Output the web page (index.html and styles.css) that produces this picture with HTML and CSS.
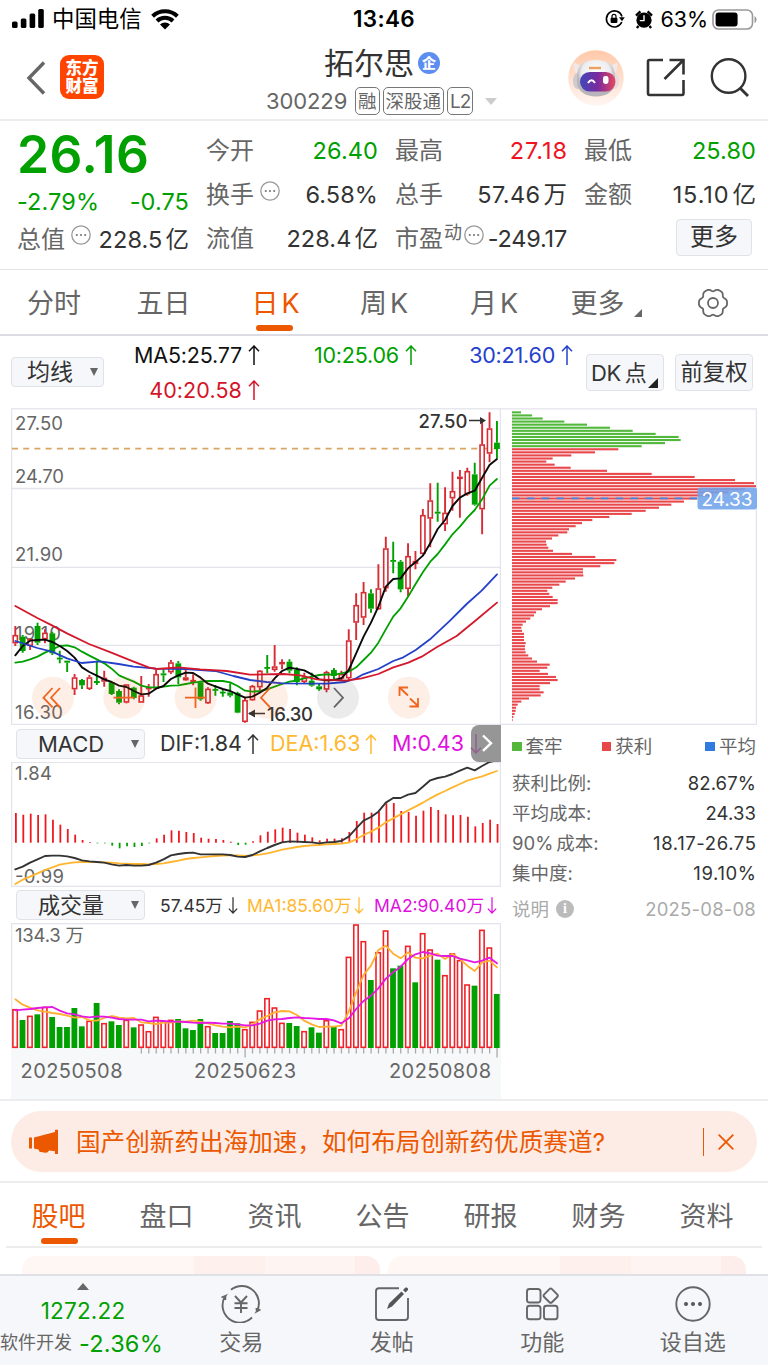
FILE: index.html
```html
<!DOCTYPE html>
<html lang="zh-CN">
<head>
<meta charset="utf-8">
<title>拓尔思 300229</title>
<link rel="stylesheet" href="styles.css">
</head>
<body>
<svg class="defs" width="0" height="0">
  <symbol id="up" viewBox="0 0 12 20"><path d="M6 20V1M1 6.2L6 1l5 5.2" fill="none" stroke="currentColor" stroke-width="1.5"/></symbol>
  <symbol id="down" viewBox="0 0 12 20"><path d="M6 0v19M1 13.8L6 19l5-5.2" fill="none" stroke="currentColor" stroke-width="1.5"/></symbol>
  <symbol id="dots" viewBox="0 0 20 20"><circle cx="10" cy="10" r="9.2" fill="none" stroke="#999" stroke-width="1.3"/><g fill="#777"><circle cx="5.8" cy="10" r="1.1"/><circle cx="10" cy="10" r="1.1"/><circle cx="14.2" cy="10" r="1.1"/></g></symbol>
</svg>

<div class="status">
  <div class="status-left">
    <svg width="32" height="20" viewBox="0 0 32 20"><rect x="0" y="12.5" width="5.6" height="6.5" rx="1.6"/><rect x="8.8" y="9.5" width="5.6" height="9.5" rx="1.6"/><rect x="17.6" y="4.5" width="5.6" height="14.5" rx="1.6"/><rect x="26.2" y="0" width="5.6" height="19" rx="1.6"/></svg>
    <span class="carrier">中国电信</span>
    <svg width="28" height="21" viewBox="0 0 28 21"><path d="M1.6 7.2a18 18 0 0 1 24.8 0M6 12a11.6 11.6 0 0 1 16 0" fill="none" stroke="#000" stroke-width="4"/><path d="M9 15.6a7 7 0 0 1 10 0L14 20.6z"/></svg>
  </div>
  <b class="clock">13:46</b>
  <div class="status-right">
    <svg width="20" height="20" viewBox="0 0 20 20"><path d="M16.8 13A8 8 0 1 1 17 7.4" fill="none" stroke="#000" stroke-width="1.6"/><path d="M14 8.2h5.8l-2.8 4z"/><rect x="5.6" y="8.8" width="6.8" height="5.2" rx="1"/><path d="M7 9V7.4a2 2 0 0 1 4 0V9" fill="none" stroke="#000" stroke-width="1.2"/></svg>
    <svg width="18" height="19" viewBox="0 0 18 19"><circle cx="9" cy="10.2" r="7.6"/><path d="M1 5.6L5.4 1.4M17 5.6L12.6 1.4M3.5 16l-1.6 2M14.5 16l1.6 2" stroke="#000" stroke-width="2.4"/><path d="M9 5.2v5.4H4.8" fill="none" stroke="#fff" stroke-width="1.4"/></svg>
    <span class="battery-text">63%</span>
    <svg width="46" height="21" viewBox="0 0 46 21"><rect x="1" y="1" width="39.5" height="19" rx="5.5" fill="none" stroke="#999" stroke-width="1.6"/><rect x="3.6" y="3.4" width="22" height="14" rx="3"/><path d="M42.5 7v7a4 4 0 0 0 0-7z" fill="#999"/></svg>
  </div>
</div>

<header class="header">
  <div class="head-left">
    <svg width="20" height="34" viewBox="0 0 20 34"><path d="M18 1.5L3 17l15 15.5" fill="none" stroke="#666" stroke-width="3.4"/></svg>
    <div class="logo"><span>东方</span><span>财富</span></div>
  </div>
  <div class="head-mid">
    <div class="title"><span>拓尔思</span><i class="badge">企</i></div>
    <div class="subtitle"><span class="code">300229</span><span class="tag">融</span><span class="tag">深股通</span><span class="tag tag-l2">L2</span><i class="caret"></i></div>
  </div>
  <div class="head-right">
    <svg width="56" height="56" viewBox="0 0 56 56">
      <defs>
        <linearGradient id="halo" x2="0" y2="1"><stop offset="0" stop-color="#ffc8a8"/><stop offset="1" stop-color="#fff6f2"/></linearGradient>
        <linearGradient id="visor"><stop offset="0" stop-color="#4048b8"/><stop offset=".5" stop-color="#7a2a9e"/><stop offset="1" stop-color="#e84860"/></linearGradient>
        <radialGradient id="head" cx=".5" cy=".35"><stop offset="0" stop-color="#fff"/><stop offset=".75" stop-color="#ededf0"/><stop offset="1" stop-color="#b8b4ba"/></radialGradient>
      </defs>
      <circle cx="28" cy="28" r="27.8" fill="url(#halo)"/>
      <path d="M6 12q-2 8 3 12l9-8q-8 0-12-4zM49 12q2 8-3 12l-9-8q8 0 12-4z" fill="#f2e8e6"/>
      <ellipse cx="9.5" cy="31" rx="4.5" ry="8" fill="#cfcad0"/><ellipse cx="46.5" cy="31" rx="4.500" ry="8" fill="#e6dcde"/>
      <path d="M9 27C9 15 16 10 28 10s19 5 19 17v5c0 9.500-9 14.500-19 14.500S9 41.500 9 32z" fill="url(#head)"/>
      <rect x="12" y="22" width="35.500" height="19.500" rx="9.700" fill="url(#visor)"/>
      <path d="M20 33q3.500-5.500 7 0" fill="none" stroke="#fff" stroke-width="2"/><rect x="35" y="26" width="5.500" height="8" rx="2.400" fill="#fff"/>
      <path d="M21 18h12" stroke="#eba05c" stroke-width="2.400"/>
    </svg>
    <svg width="40" height="40" viewBox="0 0 40 40"><path d="M17 2H3.500Q2 2 2 3.500V35Q2 37 3.500 37H36Q37.500 37 37.500 35V22M23.500 2H37.500V16.500M37 2.500L18.500 21" fill="none" stroke="#333" stroke-width="2.600"/></svg>
    <svg width="40" height="40" viewBox="0 0 40 40"><circle cx="18.600" cy="18" r="16.800" fill="none" stroke="#333" stroke-width="2.400"/><path d="M30 30l8 8" stroke="#333" stroke-width="2.800"/></svg>
  </div>
</header>

<section class="quote">
  <div class="col">
    <div class="price">26.16</div>
    <div class="cell change"><span class="v green">-2.79%</span><span class="v green">-0.75</span></div>
    <div class="cell"><span class="k">总值</span><svg class="info" width="20" height="20"><use href="#dots"/></svg><span class="v">228.5<em>亿</em></span></div>
  </div>
  <div class="col">
    <div class="cell"><span class="k">今开</span><span class="v green">26.40</span></div>
    <div class="cell"><span class="k">换手</span><svg class="info" width="20" height="20"><use href="#dots"/></svg><span class="v">6.58%</span></div>
    <div class="cell"><span class="k">流值</span><span class="v">228.4<em>亿</em></span></div>
  </div>
  <div class="col">
    <div class="cell"><span class="k">最高</span><span class="v red wide-num">27.18</span></div>
    <div class="cell"><span class="k">总手</span><span class="v mid-num">57.46<em>万</em></span></div>
    <div class="cell"><span class="k">市盈</span><span class="sup">动</span><svg class="info tight" width="20" height="20"><use href="#dots"/></svg><span class="v pe">-249.17</span></div>
  </div>
  <div class="col">
    <div class="cell"><span class="k">最低</span><span class="v green">25.80</span></div>
    <div class="cell"><span class="k">金额</span><span class="v wide-num">15.10<em>亿</em></span></div>
    <div class="cell more-cell"><button class="btn more">更多</button></div>
  </div>
</section>

<nav class="periods">
  <span>分时</span><span>五日</span><span class="on">日<em>K</em></span><span>周<em>K</em></span><span>月<em>K</em></span>
  <span class="more-tab">更多<i class="corner"></i></span>
  <span><svg width="32" height="30" viewBox="-16 -15 32 30"><path id="gear" fill="none" stroke="#666" stroke-width="1.800"/><circle r="5" fill="none" stroke="#666" stroke-width="1.800"/></svg></span>
</nav>

<section class="averages">
  <button class="btn select ma-select"><span>均线</span><i class="tri"></i></button>
  <div class="ma-grid">
    <span><b>MA5:25.77</b><svg width="12" height="20"><use href="#up"/></svg></span>
    <span class="ma-green"><b>10:25.06</b><svg width="12" height="20"><use href="#up"/></svg></span>
    <span class="ma-blue"><b>30:21.60</b><svg width="12" height="20"><use href="#up"/></svg></span>
    <span class="ma-red"><b>40:20.58</b><svg width="12" height="20"><use href="#up"/></svg></span>
  </div>
  <button class="btn square dk">DK<em>点</em><i class="corner dark"></i></button>
  <button class="btn square">前复权</button>
</section>

<main class="charts">
  <div class="left">
    <svg class="block" width="490" height="317" viewBox="11 408 490 317">
      <g stroke="#e3e4ec" stroke-width="1.300" fill="none"><rect x="11.600" y="408.800" width="488.800" height="315.700"/><path d="M12 488.500h488M12 567.300h488M12 645.300h488"/></g>
      <path d="M12 448.700H498" stroke="#d8a562" stroke-width="1.800" stroke-dasharray="6 5.200"/>
      <g class="axis"><text x="15" y="430" textLength="48">27.50</text><text x="15" y="483" textLength="49">24.70</text><text x="15" y="561" textLength="48">21.90</text><text x="15" y="640" textLength="46">19.10</text><text x="15" y="719" textLength="48">16.30</text></g>
      <g id="candles"></g>
      <g id="averages"></g>
      <g class="mark"><text x="418.500" y="428" textLength="49">27.50</text><text x="267" y="720.500" textLength="46">16.30</text></g>
      <path d="M469 420.600h13M249 713.500h16" stroke="#333" stroke-width="1.500"/><path d="M486 420.600l-6-3.600v7.200zM248 713.500l7-4v8z" fill="#333"/>
      <g fill="#ec5a0a" fill-opacity=".1"><circle cx="53" cy="697.700" r="21"/><circle cx="124.300" cy="697.700" r="21"/><circle cx="195.600" cy="697.700" r="21"/><circle cx="266.800" cy="697.700" r="21"/><circle cx="409" cy="697.700" r="21"/></g>
      <circle cx="338" cy="697.700" r="21" fill="#000" fill-opacity=".08"/>
      <g fill="none" stroke="#f0641e" stroke-width="1.800"><path d="M52.500 688l-9 9.700 9 9.700M60 688l-9 9.700 9 9.700M113.500 697.700h21M185 697.700h21M195.500 687.500v20.500M270 688l-9 9.700 9 9.700"/><path d="M399.500 696v-8.500h8.500M400 688l8 7.500M418 698v8.500h-8.500M418 706l-8-7.500"/></g>
      <path d="M334 688l9 9.700-9 9.700" fill="none" stroke="#666" stroke-width="1.800"/>
    </svg>
    <div class="bar macd-bar">
      <button class="btn select wide"><span>MACD</span><i class="tri"></i></button>
      <span class="ind i-dif"><b>DIF:1.84</b><svg width="12" height="20"><use href="#up"/></svg></span>
      <span class="ind i-dea"><b>DEA:1.63</b><svg width="12" height="20"><use href="#up"/></svg></span>
      <span class="ind i-m"><b>M:0.43</b><svg width="12" height="20"><use href="#down"/></svg></span>
      <i class="drawer"><svg width="30" height="37" viewBox="0 0 30 37"><path d="M12 10.500l8 7.700-8 7.700" fill="none" stroke="#fff" stroke-width="2.400"/></svg></i>
    </div>
    <svg class="block" width="490" height="125" viewBox="11 762 490 125">
      <path d="M11.600 762V886.400H500.400V762M11.600 762.400H500" fill="none" stroke="#e3e4ec" stroke-width="1.300"/>
      <g class="axis"><text x="15" y="780" textLength="37">1.84</text><text x="15" y="882.500" textLength="49">-0.99</text></g>
      <g id="macd"></g>
    </svg>
    <div class="bar vol-bar">
      <button class="btn select wide"><span>成交量</span><i class="tri"></i></button>
      <span class="ind i-vol"><b>57.45万</b><svg width="10" height="17"><use href="#down"/></svg></span>
      <span class="ind i-ma1"><b>MA1:85.60万</b><svg width="10" height="17"><use href="#down"/></svg></span>
      <span class="ind i-ma2"><b>MA2:90.40万</b><svg width="10" height="17"><use href="#down"/></svg></span>
    </div>
    <svg class="block" width="490" height="176" viewBox="11 923 490 176">
      <rect x="11" y="1048" width="490" height="51" fill="#f7f8fa"/>
      <path d="M11.600 1048V923.600H500.400V1048" fill="none" stroke="#e3e4ec" stroke-width="1.300"/>
      <g class="axis"><text x="15" y="941.500" textLength="69">134.3 万</text></g>
      <g id="volume"></g>
      <g class="dates"><text x="20.500" y="1077.500" textLength="102">20250508</text><text x="194" y="1077.500" textLength="102">20250623</text><text x="389" y="1077.500" textLength="102">20250808</text></g>
    </svg>
  </div>
  <aside class="chips">
    <svg class="block" width="257" height="317" viewBox="500 408 257 317">
      <path d="M501 408.800H756.400V724.500H501" fill="none" stroke="#e3e4ec" stroke-width="1.300"/>
      <g id="chips"></g>
      <path d="M512 498.400H698" stroke="#3d86e0" stroke-width="1.800" stroke-dasharray="7.500 7.300"/>
      <rect x="697.500" y="487.500" width="59.500" height="22" rx="3" fill="#6fa3ea" fill-opacity=".88"/>
      <text x="701.500" y="505.500" textLength="51" class="avg">24.33</text>
    </svg>
    <div class="legend"><span class="lg">套牢</span><span class="lr">获利</span><span class="lb">平均</span></div>
    <dl>
      <div><dt>获利比例:</dt><dd>82.67%</dd></div>
      <div><dt>平均成本:</dt><dd>24.33</dd></div>
      <div><dt>90%<em>成本:</em></dt><dd class="loose">18.17-26.75</dd></div>
      <div><dt>集中度:</dt><dd class="loose">19.10%</dd></div>
    </dl>
    <div class="note"><span>说明</span><i>i</i><time>2025-08-08</time></div>
  </aside>
</main>

<section class="promo">
  <div class="banner">
    <svg width="30" height="26" viewBox="0 0 30 26"><path d="M0 8.500h3v11H0zM5 8.500L26 3V.800h3V25h-3V22.300L20 21.500Q19 24.500 15 23.600L10.500 22.800 9.500 20.500 5 19.500z" fill="#ec5800"/></svg>
    <span class="headline">国产创新药出海加速，如何布局创新药优质赛道?</span>
    <i class="rule"></i>
    <svg width="16" height="16" viewBox="0 0 16 16"><path d="M.700.700l14.600 14.600M15.300.700L.700 15.300" stroke="#ec5800" stroke-width="1.800"/></svg>
  </div>
</section>

<nav class="tabs"><span class="on">股吧</span><span>盘口</span><span>资讯</span><span>公告</span><span>研报</span><span>财务</span><span>资料</span></nav>

<div class="cards"><div class="card"></div><div class="card"></div></div>

<footer class="dock">
  <div class="index"><i class="peak"></i><span class="index-value">1272.22</span><span class="index-row"><span>软件开发</span><b>-2.36%</b></span></div>
  <div class="item"><svg width="42" height="38" viewBox="-21 -19 42 38"><g fill="none" stroke="#666" stroke-width="1.900"><path d="M-10 -14.200A17.200 17.200 0 0 1 15.800 7.500L19.500 5.500M-19.500 -6.500L-15.500 -8.200A17.200 17.200 0 0 0 11 13.500M-15.500 -8.200L-15.800 -4M15.800 7.500L15.500 4"/><path d="M-6 -8L0 -1.500 6 -8M0 -1.500V9M-6.500 -.800H6.500M-6.500 4H6.500"/></g></svg><span>交易</span></div>
  <div class="item"><svg width="42" height="38" viewBox="-21 -19 42 38"><path d="M7 -15.700H-13Q-16 -15.700 -16 -12.700V13Q-16 16 -13 16H13Q16 16 16 13V-6" fill="none" stroke="#666" stroke-width="1.900"/><path d="M-5 5l2-5.500L9.500 -12.500 12 -10 0 2.500zM11 -14l2.500-2.500q3-.500 2.500 2.500L13.500 -11.500z" fill="#555"/></svg><span>发帖</span></div>
  <div class="item"><svg width="42" height="38" viewBox="-21 -19 42 38"><g fill="none" stroke="#666" stroke-width="1.900"><rect x="-15" y="-15" width="13.500" height="13.500" rx="2.500"/><rect x="-15" y="1.800" width="13.500" height="13.500" rx="2.500"/><rect x="2" y="1.800" width="13.500" height="13.500" rx="2.500"/><rect x="3.200" y="-13.800" width="11" height="11" rx="1.800" transform="rotate(45 8.700 -8.300)"/></g></svg><span>功能</span></div>
  <div class="item"><svg width="42" height="38" viewBox="-21 -19 42 38"><circle r="16.700" fill="none" stroke="#666" stroke-width="1.900"/><g fill="#555"><circle cx="-7" r="2"/><circle r="2"/><circle cx="7" r="2"/></g></svg><span>设自选</span></div>
</footer>
<script src="charts.js"></script>
</body>
</html>
```

FILE: styles.css
```css
* { box-sizing: border-box; }
body {
  margin: 0;
  width: 768px;
  height: 1366px;
  overflow: hidden;
  background: #fff;
  color: #333;
  font-family: Inter, "Noto Sans CJK SC", sans-serif;
  line-height: 1;
}
i, em { font-style: normal; }
svg { flex: none; }
.defs { display: none; }
.block { display: block; }
.green { color: #00a000 !important; }
.red { color: #f01420 !important; }

.btn {
  background: #f6f7fa;
  border: 1.5px solid #e0e2e8;
  border-radius: 4px;
  color: #333;
  font: inherit;
  padding: 0;
  white-space: nowrap;
}

.status {
  height: 40px;
  display: grid;
  grid-template-columns: 1fr auto 1fr;
  align-items: center;
  padding: 0 10px 2px 12px;
  color: #000;
}
.status-left, .status-right { display: flex; align-items: center; }
.status-right { justify-content: flex-end; gap: 10px; }
.carrier { font-size: 22.400px; margin: 1px 9px 0 8px; }
.clock { font-size: 22.500px; font-weight: 600; letter-spacing: .3px; margin: 1px 2px 0 0; }
.battery-text { font-size: 21.500px; letter-spacing: -.1px; margin: 1px -6px 0 -2px; }

.header {
  height: 81px;
  display: grid;
  grid-template-columns: 240px 1fr 201px;
  border-bottom: 2px solid #ededf0;
}
.head-left { display: flex; padding: 15px 0 0 26px; gap: 14px; }
.head-left > svg { margin-top: 6px; }
.logo {
  width: 44px; height: 44px;
  border-radius: 9px;
  background: #ff4400;
  color: #fff;
  font-weight: 900;
  font-size: 16.500px;
  display: flex;
  flex-direction: column;
  align-items: center;
  justify-content: center;
  line-height: 18px;
}
.head-mid { padding-top: 7px; }
.title { display: flex; align-items: center; padding-left: 84px; font-size: 30px; height: 32px; }
.badge {
  width: 22px; height: 22px; border-radius: 50%;
  background: #5c8df0; color: #fff;
  font-size: 14px; font-weight: 900;
  display: flex; align-items: center; justify-content: center;
  margin-left: 4px;
}
.subtitle { display: flex; align-items: center; padding-left: 26px; margin-top: 8px; height: 28px; color: #666; }
.code { font-size: 22px; width: 89px; letter-spacing: -.1px; }
.tag {
  height: 28px;
  border: 1.500px solid #777;
  border-radius: 5px;
  font-size: 18.500px;
  padding: 0 2px;
  margin-right: 3px;
  display: flex; align-items: center;
}
.tag-l2 { padding: 0 2px; font-size: 19px; letter-spacing: -1px; }
.caret { border: 6.500px solid transparent; border-top: 7px solid #ccc; border-bottom: 0; margin-left: 9px; }
.head-right { display: flex; padding: 10px 0 0 1px; }
.head-right svg:nth-child(2) { margin: 8px 0 0 22px; }
.head-right svg:nth-child(3) { margin: 8px 0 0 24px; }

.quote {
  height: 149px;
  display: grid;
  grid-template-columns: repeat(4, 172px);
  column-gap: 17px;
  padding: 8px 0 0 17px;
  border-bottom: 1px solid #e4e4e8;
}
.cell { height: 44px; display: flex; align-items: center; }
.k { font-size: 24px; color: #666; }
.v { font-size: 23.500px; margin-left: auto; letter-spacing: .1px; white-space: nowrap; }
.v em { margin-left: 3px; letter-spacing: 0; }
.v.mid-num { letter-spacing: .4px; }
.v.wide-num { letter-spacing: .9px; }
.v.wide-num:not(:has(em)) { margin-right: -.9px; }
.price { height: 56px; line-height: 51px; font-size: 51.500px; font-weight: 600; color: #00a000; letter-spacing: .5px; }
.change { height: 33px; padding-top: 1px; }
.change .v:first-child { margin-left: 0; }
.col:first-child .cell:last-child { height: 43px; }
.info { margin: -9px 0 0 6px; }
.info.tight { margin-left: 2px; }
.sup { font-size: 18px; color: #666; margin: -12px 0 0 1px; }
.v.pe { letter-spacing: -.2px; }
.more-cell { justify-content: flex-end; }
.more { width: 76px; height: 37px; font-size: 24px; margin: -4px 4px 0 0; }

.periods {
  height: 66px;
  display: grid;
  grid-template-columns: 108px 111px 110px 110px 110px 118px 92px;
  border-bottom: 2px solid #dcdde4;
  font-size: 27px;
  color: #666;
}
.periods > span { display: flex; align-items: center; justify-content: center; padding-top: 2px; position: relative; }
.periods > .on { padding-left: 3px; }
.periods em { margin-left: 3px; }
.periods > .more-tab { padding-right: 4px; }
.on { color: #ec5800; }
.on::after {
  content: ""; position: absolute; left: 50%; bottom: 3.500px;
  width: 37px; height: 6px; margin-left: -18.500px;
  border-radius: 3px; background: #ec5800;
}
.corner { width: 0; height: 0; border-left: 8px solid transparent; border-bottom: 8px solid #666; margin: 19px 0 0 9px; }

.averages { height: 72px; display: flex; padding: 0 15px 0 11px; }
.select { display: flex; align-items: center; justify-content: space-between; }
.tri { border: 4.500px solid transparent; border-top: 8px solid #666; border-bottom: 0; }
.ma-select { width: 93px; height: 30px; margin-top: 21px; font-size: 23px; padding: 0 5px 0 15px; }
.ma-grid {
  width: 469px;
  display: grid;
  grid-template-columns: 156px 157px 156px;
  grid-template-rows: 35px 35px;
  padding-top: 2px;
  font-size: 21.500px;
  color: #111;
}
.ma-grid span { display: flex; align-items: center; justify-content: flex-end; gap: 6px; }
.ma-grid svg { margin-top: -2px; }
.ma-grid b, .ind b { font-weight: 400; white-space: nowrap; }
.ma-grid span b { letter-spacing: -.2px; }
.ma-green { color: #00a000; }
.ma-blue { color: #2440cc; }
.ma-grid .ma-red { color: #d41428; }
.ma-grid .ma-red b { letter-spacing: .1px; }
.square { width: 78px; height: 37px; margin-top: 18px; font-size: 22.400px; flex: none; }
.dk { margin: 18px 11px 0 13px; position: relative; text-align: left; padding-left: 4px; font-size: 22px; letter-spacing: -.4px; }
.dk em { margin-left: 4px; }
.corner.dark { position: absolute; right: 5px; bottom: 2px; border-left: 10px solid transparent; border-bottom: 10px solid #222; margin: 0; }

.charts { display: flex; height: 691px; padding-left: 11px; }
.left { width: 489px; flex: none; }
.chips { width: 257px; }
.axis text, .dates text { fill: #666; font-size: 18.500px; }
.dates text { font-size: 20px; }
.mark text { fill: #333; font-size: 18.500px; font-weight: 500; }
.avg { fill: #fff; font-size: 19px; }

.bar { height: 37px; display: flex; align-items: center; padding-left: 5px; position: relative; font-size: 21.500px; }
.vol-bar { height: 36px; font-size: 17.500px; }
.bar b { padding-top: 1px; }
.wide { width: 129px; height: 30px; font-size: 22px; padding: 0 5px 0 21px; flex: none; }
.ind { display: flex; align-items: center; gap: 5px; flex: none; }
.i-dif { width: 110px; margin-left: 15px; }
.i-dea { width: 122px; color: #ffb830; }
.i-m { color: #e010e0; gap: 6px; }
.i-vol { width: 87px; margin-left: 15px; }
.i-ma1 { width: 127px; color: #ffb830; }
.i-ma2 { color: #e010e0; }
.i-ma1, .i-ma2 { gap: 3px; }
.drawer { position: absolute; left: 460px; top: 0; width: 30px; height: 37px; background: rgba(120,120,120,.78); border-radius: 8px 0 0 8px; }

.legend { display: flex; justify-content: space-between; padding: 12px 1px 0 12px; font-size: 18.500px; color: #666; }
.legend span { display: flex; align-items: center; gap: 4px; }
.legend span::before { content: ""; width: 9.500px; height: 9.500px; background: #55b83c; }
.legend .lr { margin-right: 14px; }
.legend .lr::before { background: #e84848; }
.legend .lb::before { background: #2f7be0; }
dl { margin: 13px 1px 0 12px; }
dl div { height: 29.800px; display: flex; justify-content: space-between; align-items: center; font-size: 18.500px; }
dt { color: #666; }
dt em { margin-left: 3px; }
dd { margin: 0; letter-spacing: .1px; }
dd.loose { letter-spacing: .6px; margin-right: -.6px; }
.note { display: flex; align-items: center; padding: 0 1px 0 12px; margin-top: 12px; font-size: 18.500px; color: #aaa; }
.note i { width: 18px; height: 18px; margin-left: 7px; border-radius: 50%; background: #bbb; color: #fff; font: bold 14px/18px "Liberation Serif", serif; text-align: center; }
.note time { margin-left: auto; letter-spacing: .2px; }

.promo { height: 84px; border-top: 2px solid #ededf0; border-bottom: 2px solid #ededf0; padding: 10px 11px 0; }
.banner { height: 61px; border-radius: 31px; background: #fdece5; color: #ec5800; display: flex; align-items: center; padding: 0 23px 0 18px; }
.headline { font-size: 24.600px; margin: 2px 0 0 17px; white-space: nowrap; }
.rule { width: 1.500px; height: 28px; background: #ec5800; margin: 0 14px 0 auto; }

.tabs { height: 65px; margin: 0 6px; border-bottom: 2px solid #ededf0; display: grid; grid-template-columns: repeat(7, 108px); font-size: 27px; color: #666; }
.tabs span { display: flex; justify-content: center; align-items: center; padding: 4px 3px 0 0; position: relative; }
.tabs .on::after { bottom: 2px; margin-left: -19px; }

.cards { height: 26px; padding: 8px 22px 0; display: flex; gap: 8px; overflow: hidden; }
.card { width: 358px; height: 40px; border-radius: 14px; background: linear-gradient(90deg, #fef7f3 0 48%, #fdf0ed 48% 68%, #fef4f1 68% 93%, #fdeeec 93%); }

.dock { height: 91px; background: #f6f7fa; border-top: 2px solid #dfe1e7; display: grid; grid-template-columns: 166px repeat(4, 150.500px); color: #666; }
.item { display: flex; flex-direction: column; align-items: center; padding-top: 9px; font-size: 22px; }
.item span { margin-top: 8px; }
.index { display: flex; flex-direction: column; align-items: center; padding-top: 7px; }
.peak { border: 6.500px solid transparent; border-bottom: 7px solid #666; border-top: 0; }
.index-value { color: #00a000; font-size: 22.500px; margin-top: 10px; letter-spacing: .2px; }
.index-row { display: flex; align-items: center; gap: 7px; margin-top: 9px; font-size: 18px; margin-left: -3px; white-space: nowrap; }
.index-row b { font-weight: 400; font-size: 23.500px; color: #00a000; letter-spacing: .2px; }
```

FILE: charts.js
```js
const NS = 'http://www.w3.org/2000/svg';
const el = (parent, name, attrs) => {
  const node = document.createElementNS(NS, name);
  for (const key in attrs) node.setAttribute(key, attrs[key]);
  document.getElementById(parent).appendChild(node);
};
const RED = '#d62c34', GREEN = '#00a000';
const x = i => 15.3 + 7.41 * i;

// Settings gear: a circle with six soft lobes.
let gear = '';
for (let a = 0; a <= 360; a += 3) {
  const r = 13.2 + 1.2 * Math.cos(6 * a * Math.PI / 180) - .35 * Math.cos(12 * a * Math.PI / 180);
  gear += (a ? 'L' : 'M') + (r * Math.cos(a * Math.PI / 180)).toFixed(2) + ' ' + (r * Math.sin(a * Math.PI / 180)).toFixed(2);
}
document.getElementById('gear').setAttribute('d', gear + 'Z');

// Candles: [up/down, high, low, body top, body bottom], thirds of a pixel from the panel base.
const early = `r108,168,135,160 g135,188,140,183 r145,180,147,168 g98,165,108,158 r118,160,128,148 g125,195,130,190 g182,220,203,208 g212,246,212,218
r252,315,262,298 g267,297,270,286 r255,300,262,297 g212,285,273,279 r242,290,263,275 g275,315,277,312 g298,343,303,338 r283,340,283,338
g290,328,293,324 r258,338,316,338 r282,320,292,298 r240,298,252,296 g238,276,250,256 r210,252,217,247 g213,283,220,262 r240,272,262,271
r253,286,270,277 g272,332,277,328 r292,342,296,340 g285,317,297,301 g298,320,305,309 g280,322,307,317 g305,370,309,368 r320,398,330,396
r285,332,288,331 r240,300,242,292 g195,250,231,235 r165,245,229,240 r208,238,216,223 g208,250,215,242 g232,286,240,276 r248,280,262,276
g248,290,272,287 g280,302,289,298 r242,307,246,299 g234,268,240,258 r242,272,252,266 r118,272,151,265 r10,150,45,98 r-24,105,6,83
g-2,68,10,56 r-77,60,-5,58`;
const late = `r395,560,430,550 g410,505,465,470 g465,562,470,553 r415,575,453,552 r438,493,468,477 r312,448,330,447 r235,427,286,341 g233,350,320,326
r247,378,323,358 r200,317,258,280 r195,338,215,222 r188,272,198,268 g173,302,208,299 r48,388,118,313 r22,172,70,146 g48,160,113,132`;
const parse = (text, base) => text.split(/\s+/).map(s => [s[0], ...s.slice(1).split(',').map(v => base + v / 3)]);
[...parse(early, 590), ...parse(late, 405)].forEach(([c, hi, lo, top, bottom], i) => {
  const stroke = c === 'r' ? RED : GREEN, cx = x(i);
  el('candles', 'path', { d: `M${cx} ${hi}V${top}M${cx} ${bottom}V${lo}`, stroke, 'stroke-width': 1.9 });
  const h = Math.max(bottom - top, 1.8);
  el('candles', 'rect', c === 'r'
    ? { x: cx - 2.1, y: top + .7, width: 4.2, height: Math.max(h - 1.4, .6), fill: '#fff', stroke, 'stroke-width': 1.6 }
    : { x: cx - 2.9, y: top, width: 5.8, height: h, fill: stroke });
});

const line = (parent, pts, stroke, width = 1.8) => el(parent, 'polyline', {
  points: pts.map(p => p.join()).join(' '), fill: 'none', stroke, 'stroke-width': width, 'stroke-linejoin': 'round', 'stroke-linecap': 'round' });
const series = (values, base, start = 0) => values.map((v, i) => [x(i + start), base + v / 3]);

line('averages', [
  ...series([218,215,208,200,188,178,168,166,172,185,197,208,220,236,256,266,275,287,292,292,290,287,286,282,278,275,273,273,273,277,288,302,305,303,298,290,282,275,271,265,260,255,253,254,250,245,232,210,188,158,118,80,55], 590),
  ...series([575,538,502,470,447,418,388,365,338,315,283,242,222], 405, 53)], GREEN);
line('averages', [
  ...series([196,168,152,150,149,156,168,183,203,232,246,257,268,276,287,291,303,313,311,296,288,267,256,248,249,263,281,289,297,303,313,323,320,308,293,265,243,233,237,241,253,268,271,270,265,240,190,140,98,50], 590),
  ...series([545,522,520,490,472,452,415,372,345,303,278,265,257,218,180,162], 405, 50)], '#0a0a0a', 1.9);
const thirds = (pts, x0, y0) => pts.map(([a, b]) => [x0 + a / 3, y0 + b / 3]);
line('averages', [
  ...thirds([[46,153],[112,174],[156,185],[201,205],[245,219],[300,214],[356,222],[401,230],[468,236],[557,237],[646,243],[700,258]], 0, 590),
  ...thirds([[0,270],[50,276],[100,280],[230,281],[285,276],[318,265],[340,253],[385,237],[430,213],[460,202],[497,180],[540,148],[600,92],[650,42],[695,2],[741,-47]], 250, 590)], '#2440c8');
line('averages', [
  ...thirds([[46,48],[112,84],[156,106],[201,130],[267,162],[334,188],[401,215],[446,232],[470,237],[535,232],[600,238],[680,243]], 0, 590),
  ...thirds([[0,254],[100,252],[150,256],[200,268],[290,272],[335,265],[385,252],[430,232],[475,218],[515,200],[560,172],[620,138],[675,93],[741,38]], 250, 590)], '#d4182c');

// MACD bars around the zero line, then DIF and DEA.
[174,179,176,180,178,194,209,222,239,255,261,265,265,272,280,274,276,273,265,250,239,226,227,231,234,248,251,252,255,260,270,269,259,241,230,223,218,222,233,239,247,256,251,251,250,231,198,173,173,170,145,144,168,171,182,167,156,165,178,181,180,185,214,204,194,207]
  .forEach((v, i) => el('macd', 'path', { d: `M${x(i) + .6} 842.7V${755 + v / 3}`, stroke: v > 263 ? GREEN : '#f01820', 'stroke-width': 1.8 }));
line('macd', series([387,374,365,355,345,337,329,325,322,321,321,321,322,323,325,326,327,327,328,327,325,321,317,312,309,307,305,303,302,301,301,303,301,299,295,290,284,280,276,273,271,270,268,267,266,263,253,240,230,218,202,190,178,166,155,143,130,118,108,97,87,77,70,64,56,48], 755), '#ffb52e');
line('macd', series([343,335,323,313,303,302,302,304,309,316,319,321,323,328,332,330,332,332,330,323,313,301,297,294,293,298,298,298,298,300,305,306,300,289,279,270,262,259,260,261,262,265,262,261,258,245,220,197,186,170,143,129,129,119,114,95,76,69,65,57,47,38,46,33,21,16], 755), '#333', 1.9);

// Volume.
`r762 g795 r782 g778 r755 g786 g816 g816 g759 g814 r797 g744 r804 g799 g810 r794 g817 r808 r828 r785 r798 r794 g792 g820 g825 g792 r813 g834 g834 g798 g805 r822 r800 r766 r729 r757 r803 g804 g813 r828 g817 g833 r795 g815 r822 r605 r508 r558 g675 r591 r526 g640 g632 r572 g682 r534 r583 g614 r660 r595 r615 r688 g692 r524 r577 g717`
  .split(' ').forEach((s, i) => {
    const y = 755 + s.slice(1) / 3, h = 1048 - y, cx = x(i) - .2;
    el('volume', 'rect', s[0] === 'r'
      ? { x: cx - 2.2, y: y + .7, width: 4.4, height: h - 1.4, fill: '#fff', stroke: '#f0222a', 'stroke-width': 1.6 }
      : { x: cx - 2.9, y, width: 5.8, height: h, fill: GREEN });
    if (i > 16) el('volume', 'path', { d: `M${cx + .3} 1048v${i === 31 || i === 65 ? 9.5 : 5.5}`, stroke: '#aaa', 'stroke-width': 1.3 });
  });
line('volume', series([733,749,758,766,770,774,777,782,788,786,796,797,789,783,788,790,789,802,804,807,803,803,799,800,797,801,805,811,815,817,815,817,808,793,783,772,768,769,780,797,808,816,815,815,812,770,712,660,632,585,572,596,610,592,608,610,602,596,612,597,612,632,648,622,617,637], 755), '#ffb030');
line('volume', series([766,764,762,759,757,756,767,775,778,784,787,784,785,788,792,794,794,794,799,797,798,800,800,801,803,804,803,804,806,806,808,811,811,806,797,793,792,789,787,789,790,792,792,796,805,790,762,738,722,700,671,652,635,612,598,591,595,602,603,603,611,616,622,617,608,625], 755), '#e418e4');

// Cost distribution, top row first.
[63,96,128,193,261,330,398,467,536,542,495,425,355,285,214,158,139,164,212,321,455,584,705,762,768,735,686,640,592,552,514,477,437,395,328,277,246,227,207,202,175,156,138,140,145,159,216,286,349,343,301,249,249,250,225,197,178,157,142,148,158,173,173,150,126,108,102,91,78,68,64,66,72,72,72,77,75,75,77,85,96,111,149,142,119,144,168,173,150,119,119,131,122,87,64,53,48,47,44,40,38]
  .forEach((v, i) => el('chips', 'rect', { x: 512, y: 411.3 + i * 3.077, width: (v - 36) / 3, height: 2.1, fill: i < 12 ? '#52b83c' : '#e8484c' }));
```
